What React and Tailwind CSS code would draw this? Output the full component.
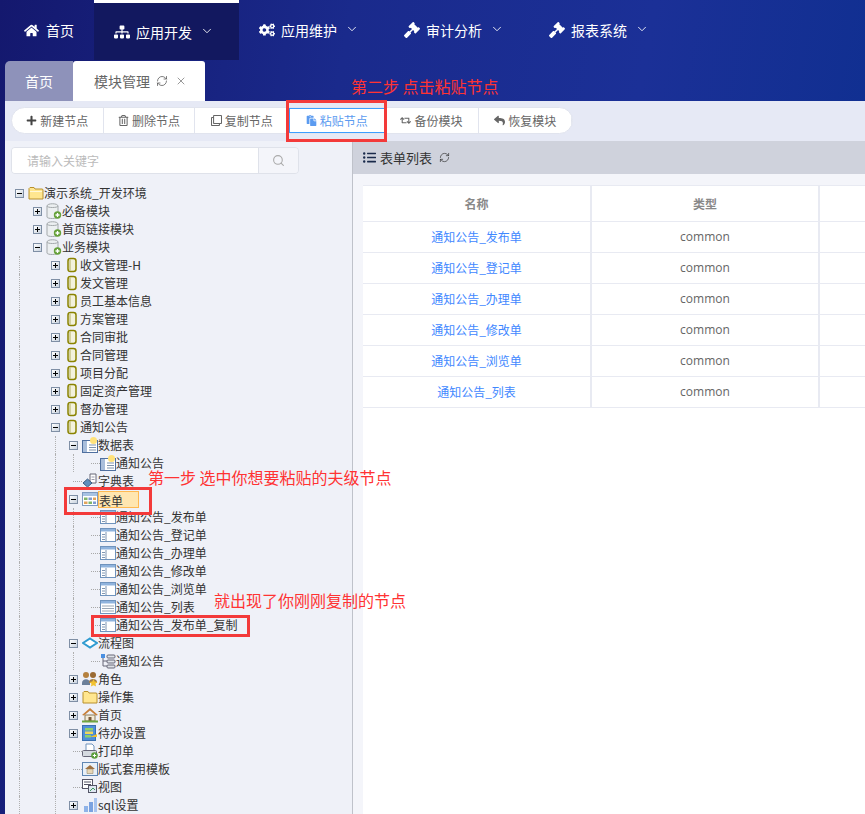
import { ChevronDown, RefreshCw, Search, X } from "lucide-react";
import {
  FaCogs,
  FaGavel,
  FaHome,
  FaListUl,
  FaPaste,
  FaPlus,
  FaRegClone,
  FaRegTrashAlt,
  FaReply,
  FaRetweet,
  FaSitemap,
} from "react-icons/fa";

const FONT = "font-['Noto_Sans_CJK_SC','Microsoft_YaHei',sans-serif]";

const NAV = [
  { label: "应用开发", icon: FaSitemap, active: true },
  { label: "应用维护", icon: FaCogs },
  { label: "审计分析", icon: FaGavel },
  { label: "报表系统", icon: FaGavel },
];

const TOOLS = [
  { label: "新建节点", icon: FaPlus, width: "w-[92px]", color: "text-[#444]" },
  { label: "删除节点", icon: FaRegTrashAlt, width: "w-[92px]" },
  { label: "复制节点", icon: FaRegClone, width: "w-[94px]" },
  { label: "粘贴节点", icon: FaPaste, width: "w-[96px]", active: true },
  { label: "备份模块", icon: FaRetweet, width: "w-[95px]" },
  { label: "恢复模块", icon: FaReply, width: "w-[93px]" },
];

const ROWS = ["发布单", "登记单", "办理单", "修改单", "浏览单", "列表"];

// icons of the tree, all on a 16 box
function Folder({ open }) {
  return (
    <svg width="16" height="16" viewBox="0 0 16 16">
      <path d="M1 14V3.5L2 2.5h4l1 1.5h7.500L15 5v9z" fill="#ffe68f" stroke="#b8902c" />
      {open && <path d="M2 6h12v1H2z" fill="#fff8d8" />}
    </svg>
  );
}

function Db() {
  return (
    <svg width="16" height="18" viewBox="0 0 16 18">
      <path d="M1 4c0-3 11-3 11 0v11c0 2-11 2-11 0z" fill="#eceff1" stroke="#a3a8ab" />
      <path d="M1 4c0 2 11 2 11 0" fill="none" stroke="#a3a8ab" />
      <circle cx="11.500" cy="13" r="3.700" fill="#66a13a" />
      <path d="M9.500 13h4M11.500 11v4" stroke="#fff" strokeWidth="1.300" />
    </svg>
  );
}

function Cylinder() {
  return (
    <svg width="12" height="16" viewBox="0 0 12 16">
      <rect x="2" y="1.500" width="8" height="13" rx="2.500" fill="#f3f2dc" stroke="#8a8300" strokeWidth="1.500" />
      <path d="M4 2v12" stroke="#c9c68c" strokeWidth="1.500" />
    </svg>
  );
}

function TableNew() {
  return (
    <svg width="16" height="16" viewBox="0 0 16 16">
      <rect x="0.500" y="3.500" width="15" height="12" fill="#fff" stroke="#4f6f9f" />
      <path d="M1 4h4v11H1z" fill="#a9bedb" />
      <path d="M7 8h7M7 10.500h7M7 13h7" stroke="#7f93ad" />
      <circle cx="11.500" cy="3.500" r="3.500" fill="#ffe27a" />
    </svg>
  );
}

function Dict() {
  return (
    <svg width="16" height="16" viewBox="0 0 16 16">
      <path d="M8 1h6v9H8z" fill="#fff" stroke="#667" />
      <path d="M9.500 4h3M9.500 6.500h3" stroke="#99a" />
      <path d="M1 10l4.500-4 4.500 4-4.500 4z" fill="#5f8fbd" stroke="#3d5d80" />
    </svg>
  );
}

function Grid() {
  return (
    <svg width="16" height="16" viewBox="0 0 16 16">
      <rect x="0.500" y="1.500" width="15" height="13" fill="#fff" stroke="#7f9bbf" />
      <path d="M1 2h14v3H1z" fill="#a8c3e3" />
      <path d="M2 6.500h3.500V9H2z" fill="#7fb56a" />
      <path d="M6.500 6.500H10V9H6.500z" fill="#7f9bd0" />
      <path d="M11 6.500h3V9h-3z" fill="#e2a35a" />
      <path d="M2 10.500h3.500V13H2z" fill="#e2a35a" />
      <path d="M6.500 10.500H10V13H6.500z" fill="#7fb56a" />
      <path d="M11 10.500h3V13h-3z" fill="#7f9bd0" />
    </svg>
  );
}

function FormIcon({ list }) {
  return (
    <svg width="16" height="16" viewBox="0 0 16 16">
      <rect x="0.500" y="1.500" width="15" height="13" fill="#fff" stroke="#6f93bd" />
      <path d="M1 2h14v2.500H1z" fill="#8fb3dd" />
      {list ? (
        <path d="M2 7h12M2 9.500h12M2 12h12" stroke="#9aa7b5" strokeWidth="1.200" />
      ) : (
        <path d="M6 5v9M2 7.500h3M2 10h3M2 12.500h3" stroke="#7f96b3" />
      )}
    </svg>
  );
}

function Flow() {
  return (
    <svg width="16" height="16" viewBox="0 0 16 16">
      <path d="M8 3.500l7 4.500-7 4.500L1 8z" fill="#fff" stroke="#2f9bd0" strokeWidth="2" />
    </svg>
  );
}

function FlowNode() {
  return (
    <svg width="16" height="16" viewBox="0 0 16 16">
      <path d="M3 4v9h4M3 8h4" fill="none" stroke="#667" />
      <rect x="1" y="1" width="4" height="4" fill="#4a90e2" />
      <rect x="7" y="2" width="8" height="3" rx="1" fill="#dfe3e8" stroke="#667" />
      <rect x="7" y="7" width="8" height="3" rx="1" fill="#dfe3e8" stroke="#667" />
      <rect x="7" y="12" width="8" height="3" rx="1" fill="#dfe3e8" stroke="#667" />
    </svg>
  );
}

function Roles() {
  return (
    <svg width="16" height="16" viewBox="0 0 16 16">
      <circle cx="4" cy="4" r="3" fill="#b5813f" />
      <circle cx="11" cy="4" r="3" fill="#9a6a33" />
      <path d="M0 12c0-5 8-5 8 0v2H0z" fill="#6b7f99" />
      <path d="M7 11c0-4 8-4 8 0v1H7z" fill="#a07a48" />
      <path d="M11.500 8l1.200 2.600 2.800.3-2 1.900.6 2.800-2.600-1.400-2.600 1.400.6-2.800-2-1.900 2.800-.3z" fill="#f2c230" />
    </svg>
  );
}

function House() {
  return (
    <svg width="16" height="16" viewBox="0 0 16 16">
      <path d="M3 8h10v6H3z" fill="#f3ead7" stroke="#8a7a5a" />
      <path d="M0 8l8-7 8 7-2 .500L8 3.500 2 8.500z" fill="#c8803a" />
      <path d="M6.500 10h3v4h-3z" fill="#7a5a3a" />
      <path d="M0 14.500h16" stroke="#6fa53f" strokeWidth="2" />
    </svg>
  );
}

function Todo() {
  return (
    <svg width="16" height="16" viewBox="0 0 16 16">
      <rect x="0.500" y="0.500" width="13" height="15" fill="#4f8fd8" stroke="#3a70b0" />
      <path d="M3 3h8v2.500H3z" fill="#8fd06a" />
      <path d="M3 6.500h8V9H3z" fill="#f0d85a" />
      <path d="M3 10h6v2.500H3z" fill="#8fd06a" />
      <path d="M8 12l7-3v3z" fill="#f2c230" />
    </svg>
  );
}

function Printer() {
  return (
    <svg width="16" height="16" viewBox="0 0 16 16">
      <path d="M4 1h6l2 2v5H4z" fill="#fff" stroke="#6f93bd" />
      <rect x="0.500" y="7.500" width="14" height="6" rx="1" fill="#d5dae0" stroke="#667" />
      <circle cx="12.500" cy="12.500" r="3.300" fill="#5a9e3a" />
      <path d="M10.800 12.500h3.400M12.500 10.800v3.400" stroke="#fff" />
    </svg>
  );
}

function Template() {
  return (
    <svg width="16" height="16" viewBox="0 0 16 16">
      <rect x="0.500" y="1.500" width="15" height="13" fill="#e8f0f8" stroke="#5f86b3" />
      <path d="M3 8l5-4 5 4z" fill="#a0703f" />
      <path d="M5 8h6v4.500H5z" fill="#e8d8b8" stroke="#8a7a5a" strokeWidth="0.500" />
    </svg>
  );
}

function ViewIcon() {
  return (
    <svg width="16" height="16" viewBox="0 0 16 16">
      <rect x="0.500" y="0.500" width="10" height="9" fill="#fff" stroke="#556" />
      <path d="M2 3h7M2 5.500h7" stroke="#556" />
      <rect x="6.500" y="6.500" width="8" height="7" fill="#dfe8f2" stroke="#556" />
      <path d="M8 12l3-3 2 2" stroke="#3a9a5a" fill="none" />
    </svg>
  );
}

function Bars() {
  return (
    <svg width="16" height="16" viewBox="0 0 16 16">
      <path d="M2 9h4v6H2z" fill="#8fb3e8" />
      <path d="M7 5h4v10H7z" fill="#7aa2e0" />
      <path d="M12 1h3v14h-3z" fill="#a8c4ef" />
    </svg>
  );
}

const ICONS = {
  root: <Folder open />,
  db: <Db />,
  cyl: <Cylinder />,
  tableNew: <TableNew />,
  dict: <Dict />,
  grid: <Grid />,
  form: <FormIcon />,
  listForm: <FormIcon list />,
  flow: <Flow />,
  flowNode: <FlowNode />,
  roles: <Roles />,
  folder: <Folder />,
  house: <House />,
  todo: <Todo />,
  print: <Printer />,
  template: <Template />,
  view: <ViewIcon />,
  bars: <Bars />,
};

// level, toggle, icon, label, guides = which ancestor columns carry a dotted line
const TREE = [
  [0, "-", "root", "演示系统_开发环境", []],
  [1, "+", "db", "必备模块", []],
  [1, "+", "db", "首页链接模块", []],
  [1, "-", "db", "业务模块", []],
  [2, "+", "cyl", "收文管理-H", [1]],
  [2, "+", "cyl", "发文管理", [1]],
  [2, "+", "cyl", "员工基本信息", [1]],
  [2, "+", "cyl", "方案管理", [1]],
  [2, "+", "cyl", "合同审批", [1]],
  [2, "+", "cyl", "合同管理", [1]],
  [2, "+", "cyl", "项目分配", [1]],
  [2, "+", "cyl", "固定资产管理", [1]],
  [2, "+", "cyl", "督办管理", [1]],
  [2, "-", "cyl", "通知公告", [1]],
  [3, "-", "tableNew", "数据表", [1, 3]],
  [4, "", "tableNew", "通知公告", [1, 3]],
  [3, "", "dict", "字典表", [1, 3]],
  [3, "-", "grid", "表单", [1, 3], true],
  [4, "", "form", "通知公告_发布单", [1, 3]],
  [4, "", "form", "通知公告_登记单", [1, 3]],
  [4, "", "form", "通知公告_办理单", [1, 3]],
  [4, "", "form", "通知公告_修改单", [1, 3]],
  [4, "", "form", "通知公告_浏览单", [1, 3]],
  [4, "", "listForm", "通知公告_列表", [1, 3]],
  [4, "", "form", "通知公告_发布单_复制", [1, 3]],
  [3, "-", "flow", "流程图", [1, 3]],
  [4, "", "flowNode", "通知公告", [1, 3]],
  [3, "+", "roles", "角色", [1, 3]],
  [3, "+", "folder", "操作集", [1, 3]],
  [3, "+", "house", "首页", [1, 3]],
  [3, "+", "todo", "待办设置", [1, 3]],
  [3, "", "print", "打印单", [1, 3]],
  [3, "", "template", "版式套用模板", [1, 3]],
  [3, "", "view", "视图", [1, 3]],
  [3, "+", "bars", "sql设置", [1, 3]],
];

function Toggle({ kind }) {
  if (!kind) {
    return (
      <div className="w-[18px] h-[18px] flex items-center">
        <div className="ml-[9px] w-[9px] border-t border-dotted border-[#a8a8a8]" />
      </div>
    );
  }
  return (
    <div className="w-[18px] h-[18px] flex items-center justify-center">
      <div className="relative w-[9px] h-[9px] border border-[#7f8fa5] bg-[linear-gradient(135deg,#ffffff,#c8d2de)]">
        <div className="absolute left-[1px] top-[3px] w-[5px] h-px bg-black" />
        {kind === "+" && <div className="absolute left-[3px] top-[1px] w-px h-[5px] bg-black" />}
      </div>
    </div>
  );
}

function TreeRow({ row }) {
  const [level, toggle, icon, label, guides, selected] = row;
  return (
    <div className="flex items-center h-[18px] whitespace-nowrap">
      {Array.from({ length: level }).map((_, i) => (
        <div key={i} className="w-[18px] h-[18px] flex justify-center">
          {guides.includes(i + 1) || i === level - 1 && level === 4 ? (
            <div className="h-[18px] border-l border-dotted border-[#b0b0b0]" />
          ) : null}
        </div>
      ))}
      <Toggle kind={toggle} />
      <div className="w-[16px] h-[18px] flex items-center justify-center shrink-0">{ICONS[icon]}</div>
      <span
        className={`text-xs leading-[18px] text-[#333] ${
          selected ? "bg-[#ffe6b0] border border-[#ffb951] h-[17px] leading-[15px] pr-[15px]" : ""
        }`}
      >
        {label}
      </span>
    </div>
  );
}

export default function App() {
  return (
    <div className={`relative w-[865px] h-[814px] overflow-hidden bg-[linear-gradient(100deg,#14186e_0%,#1a2a8c_35%,#1b3097_65%,#0b2f8e_100%)] ${FONT}`}>
      {/* Top nav */}
      <div className="flex h-[60px] text-white text-sm">
        <div className="flex items-center gap-[7px] w-[94px] pl-[24px]">
          <FaHome className="text-[15px]" />
          <span>首页</span>
        </div>
        {NAV.map((item) => {
          const Icon = item.icon;
          return (
            <div
              key={item.label}
              className={`flex items-center w-[145px] pl-[20px] ${
                item.active ? "bg-[#12185f] border-t-[3px] border-white" : ""
              }`}
            >
              <span className="w-[22px] shrink-0">
                <Icon className="text-[16px]" />
              </span>
              <span>{item.label}</span>
              <ChevronDown size={14} strokeWidth={1.500} className="ml-[8px] mb-[2px]" />
            </div>
          );
        })}
      </div>

      {/* Tabs */}
      <div className="flex h-[41px] pl-[5px] pt-px text-sm">
        <div className="flex items-center justify-center w-[68px] h-[40px] rounded-tl-[5px] bg-[#8e92ba] text-white">首页</div>
        <div className="flex items-center w-[132px] h-[40px] rounded-t-[3px] bg-white pl-[21px] text-[#666]">
          模块管理
          <RefreshCw size={12} strokeWidth={1.500} className="ml-[6px] text-[#555]" />
          <X size={12} strokeWidth={1.500} className="ml-[7px] text-[#777]" />
        </div>
      </div>

      <div className="ml-[5px] h-[713px] bg-[#e6e9f5]">
        {/* Toolbar */}
        <div className="h-[40px] pt-[6px] pl-[6px]">
          <div className="flex w-[562px] h-[27px] rounded-full bg-white border border-[#e1e4ee] overflow-hidden text-xs text-[#666]">
            {TOOLS.map((tool) => {
              const Icon = tool.icon;
              return (
                <div
                  key={tool.label}
                  className={`flex items-center justify-center gap-[3px] h-full ${tool.width} ${
                    tool.active
                      ? "border border-[#3d9eff] text-[#5b9bf0]"
                      : "border-r border-[#e1e4ee]"
                  }`}
                >
                  <Icon className={`text-[11px] ${tool.color || ""}`} />
                  {tool.label}
                </div>
              );
            })}
          </div>
        </div>

        <div className="flex h-[673px]">
          {/* Left tree panel */}
          <div className="w-[348px] shrink-0 bg-[#eff1f8] border-r border-[#bfc2ca] pt-[6px]">
            <div className="flex ml-[6px] w-[288px] h-[27px] rounded-[4px] border border-[#dfe2ea] overflow-hidden text-xs">
              <div className="flex items-center w-[247px] bg-white pl-[15px] text-[#bbb] border-r border-[#dfe2ea]">请输入关键字</div>
              <div className="flex flex-1 items-center justify-center bg-[#f4f5fa] text-[#aaa]">
                <Search size={13} />
              </div>
            </div>
            <div className="mt-[10px] ml-[5px]">
              {TREE.map((row, i) => (
                <TreeRow key={i} row={row} />
              ))}
            </div>
          </div>

          {/* Right list panel */}
          <div className="flex-1 min-w-0 bg-[#f4f5fa]">
            <div className="flex items-center h-[33px] bg-[#cfd2dc] pl-[10px] text-[13px] text-[#333]">
              <FaListUl className="text-[13px] text-[#1a2a4a] mr-[4px]" />
              表单列表
              <RefreshCw size={11} strokeWidth={1.500} className="ml-[7px]" />
            </div>
            <div className="ml-[10px] mt-[11px] h-[629px] bg-white">
              <div className="flex h-[37px] border-y border-[#e8eaf2] text-xs font-bold text-[#888]">
                <div className="flex items-center justify-center w-[229px] border-r-2 border-[#e8eaf2]">名称</div>
                <div className="flex items-center justify-center w-[228px] border-r-2 border-[#e8eaf2]">类型</div>
              </div>
              {ROWS.map((name) => (
                <div key={name} className="flex h-[31px] border-b border-[#e8eaf2] text-xs">
                  <div className="flex items-center justify-center w-[229px] border-r-2 border-[#e8eaf2] text-[#3f88ff]">通知公告_{name}</div>
                  <div className="flex items-center justify-center w-[228px] border-r-2 border-[#e8eaf2] text-[#666] font-['Open_Sans',sans-serif]">common</div>
                </div>
              ))}
            </div>
          </div>
        </div>
      </div>

      {/* Annotations drawn over the screenshot */}
      <div className="absolute left-[351px] top-[75px] text-base leading-[22px] text-[#ff3333] whitespace-nowrap">第二步 点击粘贴节点</div>
      <div className="absolute left-[148px] top-[466px] text-base leading-[22px] text-[#ff3333] whitespace-nowrap">第一步 选中你想要粘贴的夫级节点</div>
      <div className="absolute left-[214px] top-[589px] text-base leading-[22px] text-[#ff3333] whitespace-nowrap">就出现了你刚刚复制的节点</div>
      <div className="absolute left-[286px] top-[100px] w-[101px] h-[42px] border-[3px] border-[#f33a3a]" />
      <div className="absolute left-[64px] top-[487px] w-[88px] h-[28px] border-[3px] border-[#f33a3a]" />
      <div className="absolute left-[91px] top-[615px] w-[159px] h-[22px] border-[3px] border-[#f33a3a]" />
    </div>
  );
}
